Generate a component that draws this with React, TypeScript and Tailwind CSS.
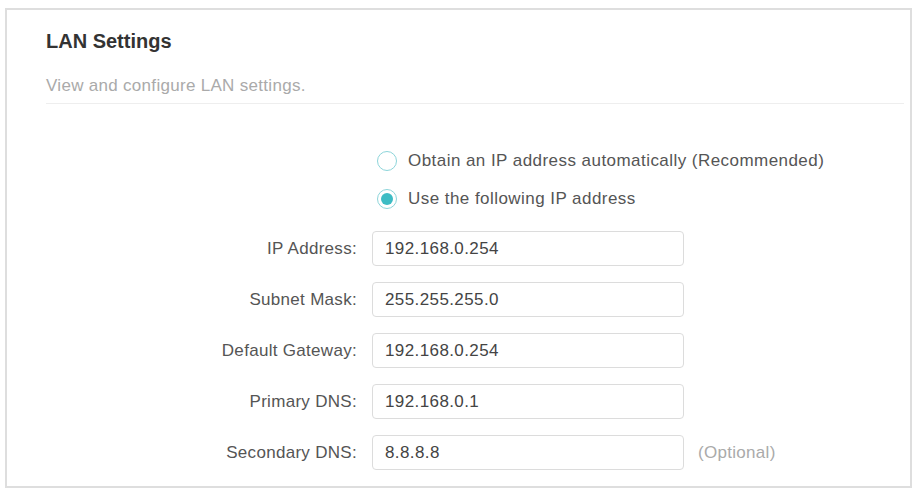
const fields = [
  { label: 'IP Address:', value: '192.168.0.254' },
  { label: 'Subnet Mask:', value: '255.255.255.0' },
  { label: 'Default Gateway:', value: '192.168.0.254' },
  { label: 'Primary DNS:', value: '192.168.0.1' },
  { label: 'Secondary DNS:', value: '8.8.8.8', note: '(Optional)' },
];

function Radio({ checked, label }: { checked?: boolean; label: string }) {
  return (
    <label className="flex items-center gap-[11px] h-[38px]">
      <span className="w-[20px] h-[20px] rounded-full border-[1.5px] border-[#8dd5da] flex items-center justify-center">
        {checked && <span className="w-[12px] h-[12px] rounded-full bg-[#3dbcc4]" />}
      </span>
      <span className="text-[17px] tracking-[0.45px] text-[#555]">{label}</span>
    </label>
  );
}

export default function App() {
  return (
    <div className="w-[915px] h-[492px] bg-white pt-[8px] pl-[5px] font-['Liberation_Sans',Arial,sans-serif]">
      <div className="w-[907px] h-[480px] border-2 border-[#dedede] px-[39px]">
        <h2 className="text-[20px] font-bold text-[#333] pt-[19px] leading-[24px]">LAN Settings</h2>
        <p className="text-[17px] tracking-[0.3px] text-[#aaa] mt-[23px] leading-[20px]">View and configure LAN settings.</p>
        <div className="border-b border-[#eeeeee] mt-[7px] mr-[-33px]" />
        <div className="pl-[331px] mt-[38px] flex flex-col">
          <Radio label="Obtain an IP address automatically (Recommended)" />
          <Radio checked label="Use the following IP address" />
        </div>
        <div className="mt-[13px] flex flex-col gap-[16px]">
          {fields.map((f) => (
            <div key={f.label} className="flex items-center">
              <span className="w-[311px] text-right text-[17px] tracking-[0.3px] text-[#555]">{f.label}</span>
              <div className="ml-[15px] w-[312px] h-[35px] border border-[#dcdcdc] rounded-[4px] flex items-center px-[12px] text-[17px] tracking-[0.4px] text-[#444]">
                {f.value}
              </div>
              {f.note && <span className="ml-[14px] text-[17px] tracking-[0.3px] text-[#aaa]">{f.note}</span>}
            </div>
          ))}
        </div>
      </div>
    </div>
  );
}
